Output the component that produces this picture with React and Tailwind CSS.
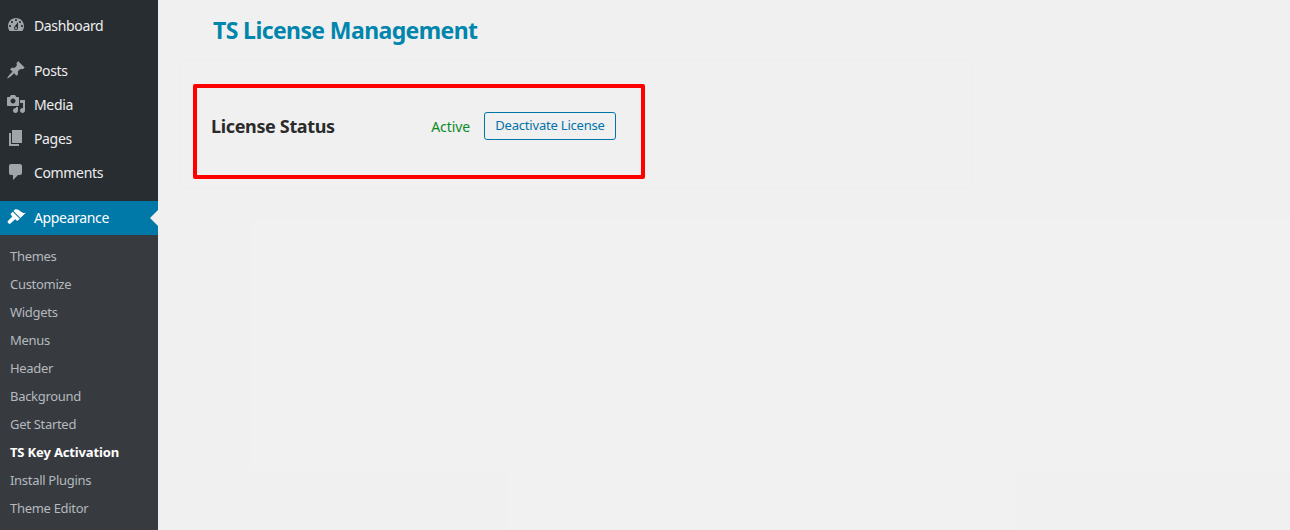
import React from 'react';

const icons = {
    dashboard: "M3.76 16h12.48c1.1-1.37 1.76-3.11 1.76-5 0-4.42-3.58-8-8-8s-8 3.58-8 8c0 1.89.66 3.63 1.76 5zM10 4c.55 0 1 .45 1 1s-.45 1-1 1-1-.45-1-1 .45-1 1-1zM6 6c.55 0 1 .45 1 1s-.45 1-1 1-1-.45-1-1 .45-1 1-1zm8 0c.55 0 1 .45 1 1s-.45 1-1 1-1-.45-1-1 .45-1 1-1zm-5.37 5.55L12 7v6c0 1.1-.9 2-2 2s-2-.9-2-2c0-.57.24-1.08.63-1.45zM4 10c.55 0 1 .45 1 1s-.45 1-1 1-1-.45-1-1 .45-1 1-1zm12 0c.55 0 1 .45 1 1s-.45 1-1 1-1-.45-1-1 .45-1 1-1zm-5 3c0-.55-.45-1-1-1s-1 .45-1 1 .45 1 1 1 1-.45 1-1z",
    posts: "M10.44 3.02l1.82-1.82 6.36 6.35-1.83 1.82c-1.05-.68-2.48-.57-3.41.36l-.75.75c-.92.93-1.04 2.35-.35 3.41l-1.83 1.82-2.41-2.41-2.8 2.79c-.42.42-3.38 2.71-3.8 2.29s1.86-3.39 2.28-3.81l2.79-2.79L4.1 9.36l1.83-1.82c1.05.69 2.48.57 3.4-.36l.75-.75c.93-.92 1.05-2.35.36-3.41z",
    media: "M13 11V4c0-.55-.45-1-1-1h-1.67L9 1H5L3.67 3H2c-.55 0-1 .45-1 1v7c0 .55.45 1 1 1h10c.55 0 1-.45 1-1zM7 4.5c1.38 0 2.5 1.12 2.5 2.5S8.38 9.5 7 9.5 4.5 8.38 4.5 7 5.62 4.5 7 4.5zM14 6h5v10.5c0 1.38-1.12 2.5-2.5 2.5S14 17.88 14 16.5s1.12-2.5 2.5-2.5c.17 0 .34.02.5.05V9h-3V6zm-4 8.05V13h2v3.5c0 1.38-1.12 2.5-2.5 2.5S7 17.88 7 16.5 8.12 14 9.5 14c.17 0 .34.02.5.05z",
    pages: "M6 15V2h10v13H6zm-1 1h8v2H3V5h2v11z",
    comments: "M5 2h9c1.1 0 2 .9 2 2v7c0 1.1-.9 2-2 2h-2l-5 5v-5H5c-1.1 0-2-.9-2-2V4c0-1.1.9-2 2-2z",
    appearance: "M14.48 11.06L7.41 3.99l1.5-1.5c.5-.56 2.3-.47 3.51.32 1.21.8 1.43 1.28 2.91 2.1 1.18.64 2.45 1.26 4.45.85zM13.77 11.77L6.7 4.7 4.93 6.47c-.39.39-.39 1.02 0 1.41l1.06 1.06c.2.2.2.5 0 .71L1.7 14.3C.9 15.1 3.4 17.6 4.17 16.77l4.65-4.29c.2-.2.5-.2.71 0l1.06 1.06c.39.39 1.02.39 1.41 0z",
};

const Icon = ({ name, className }) => (
    <svg viewBox="0 0 20 20" className={`w-5 h-5 fill-current ${className}`}>
        <path d={icons[name]} />
    </svg>
);

const MenuItem = ({ icon, label }) => (
    <div className="h-[34px] pb-[2px] flex items-center pl-[6px] text-[#eeeeee] text-[14px] tracking-[-0.35px]">
        <Icon name={icon} className="text-[#a0a5aa]" />
        <span className="ml-2">{label}</span>
    </div>
);

const subItems = ['Themes', 'Customize', 'Widgets', 'Menus', 'Header', 'Background', 'Get Started', 'TS Key Activation', 'Install Plugins', 'Theme Editor'];

export default function App() {
    return (
        <div className="flex w-[1290px] h-[530px] overflow-hidden bg-[#f0f0f0] font-['Noto_Sans',sans-serif]">
            {/* Admin menu */}
            <aside className="w-[158px] flex-shrink-0 flex flex-col bg-[#282d32]">
                <div className="mt-[9px]">
                    <MenuItem icon="dashboard" label="Dashboard" />
                </div>
                <div className="mt-[11px]">
                    <MenuItem icon="posts" label="Posts" />
                    <MenuItem icon="media" label="Media" />
                    <MenuItem icon="pages" label="Pages" />
                    <MenuItem icon="comments" label="Comments" />
                </div>
                <div className="relative mt-[11px] h-[34px] pb-[2px] flex items-center pl-[6px] bg-[#0078a8] text-white text-[14px] tracking-[-0.35px]">
                    <Icon name="appearance" className="text-white" />
                    <span className="ml-2">Appearance</span>
                    <span className="absolute right-0 top-[9px] border-y-[8px] border-r-[8px] border-y-transparent border-r-[#f0f0f0]" />
                </div>
                <div className="flex-1 bg-[#373b40] pt-[8px]">
                    {subItems.map((item) => (
                        <div
                            key={item}
                            className={`h-[28px] flex items-center pl-[10px] text-[13px] ${item === 'TS Key Activation' ? 'text-white font-bold tracking-[-0.15px]' : 'text-[#b4b9be] tracking-[-0.3px]'}`}
                        >
                            {item}
                        </div>
                    ))}
                </div>
            </aside>

            {/* Page content */}
            <main className="flex-1 min-w-0 flex flex-col">
                <h1 className="ml-[55px] mt-[15px] h-[30px] leading-[30px] text-[23px] tracking-[-0.6px] font-bold text-[#0085ad]">TS License Management</h1>
                <div className="ml-[22px] mt-[15px] w-[792px] h-[128px] border border-[#ededed] pl-[12px] pt-[23px]">
                    <div className="w-[452px] h-[95px] border-4 border-[#ff0000] rounded-[2px] pl-[14px] pr-[25px] pt-[24px] flex items-start">
                        <h2 className="text-[18px] leading-[28px] tracking-[-0.35px] font-bold text-[#2b2b2b]">License Status</h2>
                        <span className="ml-auto text-[14px] leading-[30px] tracking-[-0.1px] text-[#0a8a2a]">Active</span>
                        <button className="ml-[14px] w-[132px] h-[28px] border border-[#0073aa] rounded-[3px] text-[13px] tracking-[-0.2px] text-[#0073aa]">Deactivate License</button>
                    </div>
                </div>
                <div className="ml-[92px] mt-[32px] h-[250px] bg-[#f1f1f1]" />
                <div className="ml-[349px] mt-[2px] w-[510px] flex-1 bg-[#f1f1f1]" />
            </main>
        </div>
    );
}
